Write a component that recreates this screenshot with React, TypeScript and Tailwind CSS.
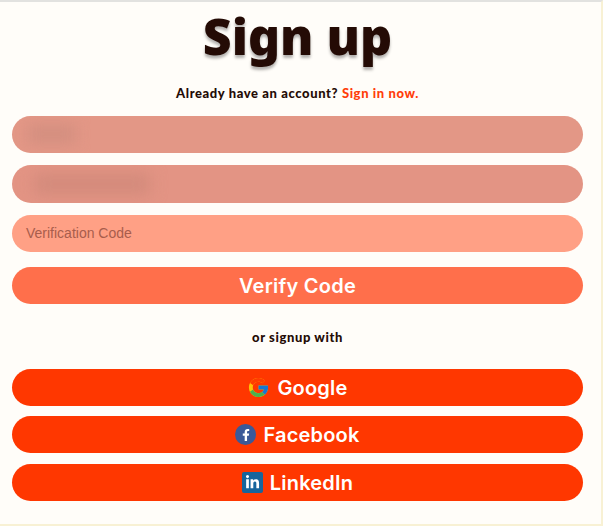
import { FaFacebookF, FaLinkedinIn } from "react-icons/fa";
import { FcGoogle } from "react-icons/fc";

const social_class =
  "h-[37px] w-full rounded-full bg-[#ff3700] flex items-center justify-center gap-[7px] text-white text-[20px] tracking-[0.2px] font-semibold font-['Inter',sans-serif]";

export default function App() {
  return (
    <div className="w-[603px] h-[526px] bg-[#fffdf9] border-t-2 border-t-[#e2e2e0] border-r-2 border-r-[#f8f1d4] border-b-2 border-b-[#f8f1d4] overflow-hidden font-['Inter',sans-serif]">
      <div className="flex flex-col items-center px-[12px] w-[595px]">
        <h1 className="h-[66px] text-[50px] leading-[68px] font-black text-[#240b05] font-['Noto_Sans',sans-serif] [text-shadow:0_3px_3px_rgba(0,0,0,0.3)]">
          Sign up
        </h1>
        <p className="mt-[17px] h-[16px] text-[13px] leading-[16px] font-black text-[#240b05] font-['Lato',sans-serif] tracking-[0.6px]">
          Already have an account?{" "}
          <a className="text-[#ff3d0a]">Sign in now.</a>
        </p>
        <div className="relative mt-[15px] h-[37px] w-[571px] rounded-full bg-[#e39786] overflow-hidden">
          <div className="absolute left-[16px] top-[8px] h-[20px] w-[48px] bg-[#d48f80] blur-[7px]" />
        </div>
        <div className="relative mt-[12px] h-[38px] w-[571px] rounded-full bg-[#e39484] overflow-hidden">
          <div className="absolute left-[22px] top-[9px] h-[20px] w-[116px] bg-[#d28a7b] blur-[8px]" />
        </div>
        <div className="mt-[12px] h-[37px] w-[571px] rounded-full bg-[#ffa085] flex items-center pl-[14px] text-[14px] text-[#a85d4c] font-['Liberation_Sans',sans-serif]">
          Verification Code
        </div>
        <button className="mt-[15px] h-[37px] w-[571px] rounded-full bg-[#ff6f4b] text-white text-[20px] tracking-[0.25px] font-semibold flex items-center justify-center">
          Verify Code
        </button>
        <p className="mt-[25px] h-[16px] text-[13px] leading-[16px] font-black text-[#240b05] font-['Lato',sans-serif] tracking-[0.6px]">
          or signup with
        </p>
        <div className="mt-[24px] w-[571px] flex flex-col gap-[10px]">
          <button className={social_class}>
            <FcGoogle className="w-[23px] h-[23px]" />
            Google
          </button>
          <button className={social_class}>
            <span className="w-[21px] h-[21px] rounded-full bg-[#3b5998] flex items-center justify-center">
              <FaFacebookF className="w-[12px] h-[12px] text-white" />
            </span>
            Facebook
          </button>
          <button className={`${social_class} mt-[1px]`}>
            <span className="w-[21px] h-[21px] rounded-[2px] bg-[#17659c] flex items-center justify-center">
              <FaLinkedinIn className="w-[15px] h-[15px] text-white" />
            </span>
            LinkedIn
          </button>
        </div>
      </div>
    </div>
  );
}
